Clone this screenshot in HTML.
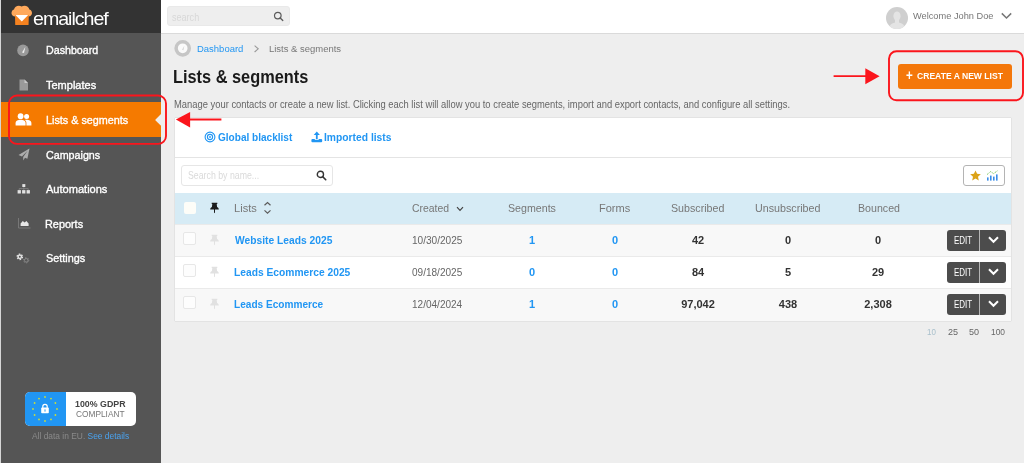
<!DOCTYPE html>
<html lang="en"><head><meta charset="utf-8"><title>Lists &amp; segments</title>
<style>
*{box-sizing:border-box;margin:0;padding:0}
html,body{width:1024px;height:463px;overflow:hidden;background:#eeeeee;font-family:"Liberation Sans",Arial,sans-serif;color:#333}
body{position:relative;will-change:transform}
.abs{position:absolute}
.t{position:absolute;white-space:nowrap;line-height:1;transform-origin:0 0}
#leftline{left:0;top:0;width:1px;height:463px;background:#d6d6d6}
#side{left:1px;top:0;width:159.6px;height:463px;background:#555555}
#logo{left:1px;top:0;width:159.6px;height:33px;background:#333333}
#top{left:160.6px;top:0;width:863.4px;height:34px;background:#fff;border-bottom:1px solid #dadada}
#active{left:1px;top:102.3px;width:159.6px;height:35px;background:#f57a00}
.mi{color:#fff;font-size:11px;font-weight:normal;-webkit-text-stroke:0.35px;left:46px}
#card{left:175px;top:117.5px;width:836px;height:203.5px;background:#fff;box-shadow:0 0 1px rgba(0,0,0,.25)}
.blue{color:#2196f3}
.hd{color:#777;font-size:11px}
.dt{color:#666;font-size:10px}
.num{color:#333;font-size:11px;font-weight:bold}
.c{width:100px;text-align:center}
.lnk{color:#2196f3;font-size:11px;font-weight:bold}
.cb{position:absolute;left:183px;width:13px;height:13px;background:#fdfdfd;border:1px solid #e7e7e7;border-radius:2px}
.edit{position:absolute;left:947px;width:59px;height:20.5px;background:#4c4c4c;border-radius:3px}
.edit i{position:absolute;left:32px;top:0;width:1px;height:20.5px;background:#b5b5b5}
.edit span{position:absolute;left:6.6px;top:6px;font-size:10px;color:#fff;line-height:1;transform:scaleX(.8);transform-origin:0 0}
.edit svg{position:absolute;left:41px;top:6px}
</style></head><body>
<div id="leftline" class="abs"></div>
<div id="side" class="abs"></div>
<div id="logo" class="abs"></div>
<div id="top" class="abs"></div>
<div id="active" class="abs"></div>

<!-- sidebar labels -->
<div class="t mi" id="m1" style="left:46px;top:45px;transform:scaleX(0.9695)">Dashboard</div>
<div class="t mi" id="m2" style="left:46px;top:80px;transform:scaleX(1.0)">Templates</div>
<div class="t mi" id="m3" style="left:46px;top:115px;transform:scaleX(0.9819)">Lists &amp; segments</div>
<div class="t mi" id="m4" style="left:46px;top:150px;transform:scaleX(0.9735)">Campaigns</div>
<div class="t mi" id="m5" style="left:46px;top:184px;transform:scaleX(1.004)">Automations</div>
<div class="t mi" id="m6" style="left:45px;top:219px;transform:scaleX(0.9886)">Reports</div>
<div class="t mi" id="m7" style="left:46px;top:253px;transform:scaleX(0.9872)">Settings</div>

<!-- logo text -->
<div class="t" id="lg" style="left:33px;top:9px;color:#fff;font-size:19px;letter-spacing:-1px;transform:scaleX(1.0330)">emailchef</div>

<!-- top bar -->
<div class="abs" id="srch" style="left:167px;top:6px;width:123px;height:20px;background:#eeeeee;border:1px solid #e9e9e9;border-radius:3px"></div>
<div class="t" id="sp" style="left:172px;top:12px;font-size:10.5px;color:#d8d8d8;transform:scaleX(0.8625)">search</div>
<div class="t" id="wl" style="left:913px;top:11.4px;font-size:9.5px;color:#777;transform:scaleX(0.9727)">Welcome John Doe</div>

<!-- breadcrumb + title -->
<div class="t blue" id="b1" style="left:197px;top:44.5px;font-size:9.2px;transform:scaleX(1.0311)">Dashboard</div>
<div class="t" id="b2" style="left:269px;top:44.5px;font-size:9.2px;color:#777;transform:scaleX(1.0307)">Lists &amp; segments</div>
<div class="t" id="ttl" style="left:173px;top:68px;font-size:18px;font-weight:bold;color:#1a1a1a;transform:scaleX(0.9078)">Lists &amp; segments</div>
<div class="t" id="dsc" style="left:174px;top:100px;font-size:10px;color:#666;transform:scaleX(0.9384)">Manage your contacts or create a new list. Clicking each list will allow you to create segments, import and export contacts, and configure all settings.</div>

<!-- create button -->
<div class="abs" id="cbtn" style="left:898px;top:64px;width:114px;height:25px;background:#f4770a;border-radius:3px"></div>
<div class="t" id="cpl" style="left:906px;top:68px;font-size:14.5px;font-weight:bold;color:#fff;transform:scaleX(0.8)">+</div>
<div class="t" id="cbt" style="left:917px;top:71px;font-size:9.4px;font-weight:bold;color:#fff;transform:scaleX(0.9147)">CREATE A NEW LIST</div>

<!-- card -->
<div id="card" class="abs"></div>
<div class="abs" style="left:175px;top:157px;width:836px;height:1px;background:#e4e4e4"></div>
<div class="t lnk" id="tb1" style="left:218px;top:131.8px;transform:scaleX(0.9138)">Global blacklist</div>
<div class="t lnk" id="tb2" style="left:324px;top:131.8px;transform:scaleX(0.9354)">Imported lists</div>
<div class="abs" style="left:181px;top:165px;width:152px;height:21px;background:#fff;border:1px solid #e6e6e6;border-radius:3px"></div>
<div class="t" id="sbn" style="left:188px;top:170px;font-size:11px;color:#dadada;transform:scaleX(0.7969)">Search by name...</div>
<div class="abs" style="left:963px;top:165px;width:42px;height:21px;background:#fff;border:1px solid #b4b4b4;border-radius:3px"></div>

<!-- table -->
<div class="abs" style="left:175px;top:193px;width:836px;height:31px;background:#d6ebf5"></div>
<div class="abs" style="left:175px;top:224px;width:836px;height:32px;background:#f8f8f8;border-top:1px solid #eaeaea"></div>
<div class="abs" style="left:175px;top:256px;width:836px;height:32px;background:#fff;border-top:1px solid #eaeaea"></div>
<div class="abs" style="left:175px;top:288px;width:836px;height:33px;background:#f8f8f8;border-top:1px solid #eaeaea"></div>

<div class="cb" style="left:184px;top:201.6px;width:12px;height:12px;border:none;background:#fdfdf8"></div>
<div class="cb" style="top:232.4px"></div>
<div class="cb" style="top:264.4px"></div>
<div class="cb" style="top:296.4px"></div>

<div class="t hd" id="h1" style="left:234px;top:203px;transform:scaleX(1.0082)">Lists</div>
<div class="t hd" id="h2" style="left:412px;top:203px;transform:scaleX(0.9482)">Created</div>
<div class="t hd" id="h3" style="left:508px;top:203px;transform:scaleX(0.9681)">Segments</div>
<div class="t hd" id="h4" style="left:599px;top:203px;transform:scaleX(1.0028)">Forms</div>
<div class="t hd" id="h5" style="left:671px;top:203px;transform:scaleX(0.9692)">Subscribed</div>
<div class="t hd" id="h6" style="left:755px;top:203px;transform:scaleX(0.9732)">Unsubscribed</div>
<div class="t hd" id="h7" style="left:858px;top:203px;transform:scaleX(0.9660)">Bounced</div>

<div class="t lnk" id="r1a" style="left:235px;top:235px;transform:scaleX(0.9332)">Website Leads 2025</div>
<div class="t lnk" id="r2a" style="left:234px;top:267px;transform:scaleX(0.9322)">Leads Ecommerce 2025</div>
<div class="t lnk" id="r3a" style="left:234px;top:299px;transform:scaleX(0.9170)">Leads Ecommerce</div>
<div class="t dt" id="r1b" style="left:412px;top:236px;transform:scaleX(1.0076)">10/30/2025</div>
<div class="t dt" id="r2b" style="left:412px;top:268px;transform:scaleX(1.0033)">09/18/2025</div>
<div class="t dt" id="r3b" style="left:412px;top:300px;transform:scaleX(1.0030)">12/04/2024</div>

<div class="edit" style="top:230px"><span>EDIT</span><i></i><svg width="11" height="8" viewBox="0 0 11 8"><path d="M1 1.2 L5.5 5.8 L10 1.2" fill="none" stroke="#fff" stroke-width="2"/></svg></div>
<div class="edit" style="top:262px"><span>EDIT</span><i></i><svg width="11" height="8" viewBox="0 0 11 8"><path d="M1 1.2 L5.5 5.8 L10 1.2" fill="none" stroke="#fff" stroke-width="2"/></svg></div>
<div class="edit" style="top:294px"><span>EDIT</span><i></i><svg width="11" height="8" viewBox="0 0 11 8"><path d="M1 1.2 L5.5 5.8 L10 1.2" fill="none" stroke="#fff" stroke-width="2"/></svg></div>

<!-- GDPR -->
<div class="abs" style="left:25px;top:392px;width:111px;height:34px;background:#fff;border-radius:5px;overflow:hidden"><div style="width:41px;height:34px;background:#2196f3"></div></div>
<div class="t" id="g1" style="left:75px;top:400px;font-size:9px;font-weight:bold;color:#444;transform:scaleX(0.9807)">100% GDPR</div>
<div class="t" id="g2" style="left:76px;top:410px;font-size:9px;color:#777;transform:scaleX(0.9242)">COMPLIANT</div>
<div class="t" id="g3" style="left:32px;top:432px;font-size:9px;color:#8a8a8a;transform:scaleX(0.9334)">All data in EU. <span style="color:#4aa3f0">See details</span></div>

<!-- pagination -->
<div class="t" id="p1" style="left:927px;top:328px;font-size:8.5px;color:#a9c0cc;transform:scaleX(0.9378)">10</div>
<div class="t" id="p2" style="left:948px;top:328px;font-size:8.5px;color:#666;transform:scaleX(1.0618)">25</div>
<div class="t" id="p3" style="left:969px;top:328px;font-size:8.5px;color:#666;transform:scaleX(1.0618)">50</div>
<div class="t" id="p4" style="left:991px;top:328px;font-size:8.5px;color:#666;transform:scaleX(0.9880)">100</div>

<!-- numbers -->
<div class="t lnk c" id="n1a" style="left:482px;top:235px">1</div>
<div class="t lnk c" id="n2a" style="left:482px;top:267px">0</div>
<div class="t lnk c" id="n3a" style="left:482px;top:299px">1</div>
<div class="t lnk c" id="n1b" style="left:565px;top:235px">0</div>
<div class="t lnk c" id="n2b" style="left:565px;top:267px">0</div>
<div class="t lnk c" id="n3b" style="left:565px;top:299px">0</div>
<div class="t num c" id="n1c" style="left:648px;top:235px">42</div>
<div class="t num c" id="n2c" style="left:648px;top:267px">84</div>
<div class="t num c" id="n3c" style="left:648px;top:299px">97,042</div>
<div class="t num c" id="n1d" style="left:738px;top:235px">0</div>
<div class="t num c" id="n2d" style="left:738px;top:267px">5</div>
<div class="t num c" id="n3d" style="left:738px;top:299px">438</div>
<div class="t num c" id="n1e" style="left:828px;top:235px">0</div>
<div class="t num c" id="n2e" style="left:828px;top:267px">29</div>
<div class="t num c" id="n3e" style="left:828px;top:299px">2,308</div>

<!-- logo icon -->
<svg class="abs" style="left:0;top:0" width="40" height="33" viewBox="0 0 40 33">
<path d="M15.2 16.4 C10.6 16.4 10.4 10.4 14 9.4 C14.6 5.8 19.2 4.6 21.6 6.6 C24.2 4.6 28.8 5.8 29.4 9.4 C33.2 10.4 32.8 16.4 28.6 16.4 Z" fill="#ffa95c"/>
<path d="M15 15 H28.8 L28.6 24.4 Q28.6 25 28 25 H15.8 Q15.2 25 15.2 24.4 Z" fill="#f58220"/>
<path d="M15.4 15 H28.2 L21.8 21.6 Z" fill="#fff"/>
</svg>

<!-- sidebar icons -->
<svg class="abs" style="left:16px;top:44px" width="14" height="13" viewBox="0 0 14 13"><circle cx="7" cy="6.4" r="5.8" fill="#999"/><path d="M6 8.6 L9.4 2.8 L8 9 Z" fill="#eee"/></svg>
<svg class="abs" style="left:19px;top:79px" width="10" height="12" viewBox="0 0 10 12"><path d="M0.5 0.5 H5.5 L9 4 V11.5 H0.5 Z" fill="#9a9a9a"/><path d="M5.5 0.5 V4 H9 Z" fill="#c8c8c8"/></svg>
<svg class="abs" style="left:15px;top:113px" width="17" height="13" viewBox="0 0 17 13"><circle cx="5.6" cy="3.2" r="2.9" fill="#fff"/><circle cx="11.6" cy="3.4" r="2.5" fill="#fff"/><path d="M0.6 12.6 V10.2 C0.6 7.6 3 6.8 5.6 6.8 C8.2 6.8 10.6 7.6 10.6 10.2 V12.6 Z" fill="#fff"/><path d="M11.4 12.6 V10 C11.4 8.6 10.8 7.6 9.8 7 C10.4 6.9 11 6.8 11.6 6.8 C14 6.8 16.4 7.6 16.4 10 V12.6 Z" fill="#fff"/></svg>
<svg class="abs" style="left:18px;top:148px" width="12" height="13" viewBox="0 0 12 13"><path d="M11.5 0.5 L0.5 7 L4 8.4 L9.6 2.8 L5.2 9 V12.4 L7 9.8 L9.4 10.8 Z" fill="#adadad"/></svg>
<svg class="abs" style="left:17px;top:183px" width="14" height="11" viewBox="0 0 14 11"><g fill="#e1e1e1"><rect x="5.3" y="1.1" width="3" height="2.9"/><rect x="0.6" y="7.1" width="3.3" height="3.4"/><rect x="5.1" y="7.1" width="3.3" height="3.4"/><rect x="9.6" y="7.1" width="3.3" height="3.4"/></g><path d="M6.8 4 V5.6 M2.2 7.1 V5.6 H11.2 V7.1 M6.8 5.6 V7.1" stroke="#8a8a8a" stroke-width="0.7" fill="none"/></svg>
<svg class="abs" style="left:18px;top:218px" width="13" height="11" viewBox="0 0 13 11"><path d="M0.5 0 V10 H12.6" stroke="#808080" stroke-width="0.8" fill="none"/><path d="M2.6 8 V5.6 L4.8 3 L6.6 4.4 L8.4 3 L10.6 5.6 V8 Z" fill="#e6e6e6"/></svg>
<svg class="abs" style="left:16px;top:252px" width="16" height="13" viewBox="0 0 16 13"><circle cx="3.8" cy="4.8" r="2.7" fill="none" stroke="#e2e2e2" stroke-width="1.3" stroke-dasharray="1.5 1.33"/><circle cx="3.8" cy="4.8" r="1.7" fill="none" stroke="#e2e2e2" stroke-width="1.5"/><circle cx="10.2" cy="8.3" r="2.6" fill="none" stroke="#8c8c8c" stroke-width="1" stroke-dasharray="1.2 1.52"/><circle cx="10.2" cy="8.3" r="1.8" fill="none" stroke="#8c8c8c" stroke-width="0.9"/></svg>
<!-- notch -->
<svg class="abs" style="left:155px;top:113px" width="6" height="14" viewBox="0 0 6 14"><path d="M6 0.9 L0.1 6.9 L6 12.8 Z" fill="#eeeeee"/></svg>

<!-- GDPR icon -->
<svg class="abs" style="left:30px;top:394px" width="30" height="30" viewBox="0 0 30 30"><g fill="#cddc39"><circle cx="15" cy="3" r="0.9"/><circle cx="21" cy="4.6" r="0.9"/><circle cx="25.4" cy="9" r="0.9"/><circle cx="27" cy="15" r="0.9"/><circle cx="25.4" cy="21" r="0.9"/><circle cx="21" cy="25.4" r="0.9"/><circle cx="15" cy="27" r="0.9"/><circle cx="9" cy="25.4" r="0.9"/><circle cx="4.6" cy="21" r="0.9"/><circle cx="3" cy="15" r="0.9"/><circle cx="4.6" cy="9" r="0.9"/><circle cx="9" cy="4.6" r="0.9"/></g><rect x="11.2" y="13.6" width="7.6" height="5.6" rx="0.8" fill="#fff"/><path d="M12.8 14 V12.6 A2.2 2.2 0 0 1 17.2 12.6 V14" fill="none" stroke="#fff" stroke-width="1.2"/><rect x="14.5" y="15.4" width="1" height="2.2" fill="#2196f3"/></svg>

<!-- top bar icons -->
<svg class="abs" style="left:273px;top:11px" width="12" height="11" viewBox="0 0 12 11"><circle cx="4.8" cy="4.6" r="3.3" fill="none" stroke="#5c5c5c" stroke-width="1.2"/><path d="M7.2 7 L9.8 9.4" stroke="#5c5c5c" stroke-width="1.4" stroke-linecap="round"/></svg>
<svg class="abs" style="left:886px;top:6.5px" width="22" height="22" viewBox="0 0 22 22"><defs><clipPath id="av"><circle cx="11" cy="11" r="11"/></clipPath></defs><circle cx="11" cy="11" r="11" fill="#cfcfcf"/><g clip-path="url(#av)" fill="#e4e4e4"><ellipse cx="11" cy="9" rx="3.6" ry="4.6"/><path d="M3 23 C3 17 7 15.6 11 15.6 C15 15.6 19 17 19 23 Z"/><rect x="9" y="12" width="4" height="5"/></g></svg>
<svg class="abs" style="left:1001px;top:12px" width="11" height="8" viewBox="0 0 11 8"><path d="M0.8 1.4 L5.5 6 L10.2 1.4" fill="none" stroke="#777" stroke-width="1.5"/></svg>

<!-- breadcrumb icons -->
<svg class="abs" style="left:174px;top:39px" width="18" height="18" viewBox="0 0 18 18"><circle cx="8.7" cy="9.3" r="6.6" fill="#fafafa" stroke="#c6c6c6" stroke-width="3.5"/><path d="M8 10.8 L10.4 6.8 L9.4 11.2 Z" fill="#d4d4d4"/></svg>
<svg class="abs" style="left:253px;top:44px" width="7" height="10" viewBox="0 0 7 10"><path d="M1.6 1.6 L5.2 4.8 L1.6 8" fill="none" stroke="#9a9a9a" stroke-width="1.1"/></svg>

<!-- tab icons -->
<svg class="abs" style="left:203.8px;top:131px" width="12" height="12" viewBox="0 0 12 12"><circle cx="6" cy="6" r="4.9" fill="none" stroke="#2196f3" stroke-width="1.1"/><circle cx="6" cy="6" r="2.6" fill="none" stroke="#2196f3" stroke-width="1.1"/><circle cx="6" cy="6" r="0.9" fill="#2196f3"/></svg>
<svg class="abs" style="left:311px;top:131px" width="12" height="12" viewBox="0 0 12 12"><path d="M5.8 0.6 L8.9 3.9 H6.7 V8.2 H4.9 V3.9 H2.7 Z" fill="#2196f3"/><path d="M1.4 8 H3.6 C3.6 9.3 8 9.3 8 8 H10.2 Q11.2 8 11.2 9 V10.2 Q11.2 11.2 10.2 11.2 H1.4 Q0.4 11.2 0.4 10.2 V9 Q0.4 8 1.4 8 Z" fill="#2196f3"/></svg>
<svg class="abs" style="left:315.6px;top:169.6px" width="11" height="11" viewBox="0 0 12 12"><circle cx="4.8" cy="4.8" r="3.4" fill="none" stroke="#333" stroke-width="1.5"/><path d="M7.4 7.4 L10.6 10.6" stroke="#333" stroke-width="1.8" stroke-linecap="round"/></svg>

<!-- star + chart -->
<svg class="abs" style="left:970px;top:170px" width="11" height="11" viewBox="0 0 11 11"><path d="M5.5 0.4 L7.1 3.8 L10.8 4.2 L8 6.7 L8.8 10.4 L5.5 8.5 L2.2 10.4 L3 6.7 L0.2 4.2 L3.9 3.8 Z" fill="#dca318"/></svg>
<svg class="abs" style="left:986px;top:170px" width="13" height="11" viewBox="0 0 13 11"><g fill="#3b8ee8"><rect x="1" y="7.4" width="1.6" height="3.2"/><rect x="4" y="5.6" width="1.6" height="5"/><rect x="7" y="6.6" width="1.6" height="4"/><rect x="10" y="4.4" width="1.6" height="6.2"/></g><path d="M1 4.6 L4.6 1.6 L7.6 3.6 L11.4 0.8" fill="none" stroke="#6cc04a" stroke-width="0.9" stroke-dasharray="1.2 0.8"/></svg>

<!-- header pin + sort -->
<svg class="abs" style="left:209px;top:202px" width="11" height="12" viewBox="0 0 11 12"><path d="M2.7 0.8 H8.3 V2 H7.7 L8.1 5 C9.2 5.5 9.8 6.5 9.8 7.6 H6 V10.4 L5.5 11.3 L5 10.4 V7.6 H1.2 C1.2 6.5 1.8 5.5 2.9 5 L3.3 2 H2.7 Z" fill="#1c1c1c"/></svg>
<svg class="abs" style="left:263px;top:201px" width="9" height="14" viewBox="0 0 9 14"><path d="M1.5 4.2 L4.5 1.5 L7.5 4.2 M1.5 9.4 L4.5 12.1 L7.5 9.4" fill="none" stroke="#5a5a5a" stroke-width="1.2"/></svg>
<svg class="abs" style="left:456px;top:206px" width="8" height="6" viewBox="0 0 8 6"><path d="M1 1.2 L4 4.4 L7 1.2" fill="none" stroke="#444" stroke-width="1.2"/></svg>
<!-- row pins -->
<svg class="abs" style="left:209px;top:234px" width="11" height="12" viewBox="0 0 11 12"><path d="M2.7 0.8 H8.3 V2 H7.7 L8.1 5 C9.2 5.5 9.8 6.5 9.8 7.6 H6 V10.4 L5.5 11.3 L5 10.4 V7.6 H1.2 C1.2 6.5 1.8 5.5 2.9 5 L3.3 2 H2.7 Z" fill="#e1e1e1"/></svg>
<svg class="abs" style="left:209px;top:266px" width="11" height="12" viewBox="0 0 11 12"><path d="M2.7 0.8 H8.3 V2 H7.7 L8.1 5 C9.2 5.5 9.8 6.5 9.8 7.6 H6 V10.4 L5.5 11.3 L5 10.4 V7.6 H1.2 C1.2 6.5 1.8 5.5 2.9 5 L3.3 2 H2.7 Z" fill="#e1e1e1"/></svg>
<svg class="abs" style="left:209px;top:298px" width="11" height="12" viewBox="0 0 11 12"><path d="M2.7 0.8 H8.3 V2 H7.7 L8.1 5 C9.2 5.5 9.8 6.5 9.8 7.6 H6 V10.4 L5.5 11.3 L5 10.4 V7.6 H1.2 C1.2 6.5 1.8 5.5 2.9 5 L3.3 2 H2.7 Z" fill="#e1e1e1"/></svg>

<!-- red annotations -->
<svg class="abs" style="left:0;top:0;pointer-events:none" width="1024" height="463" viewBox="0 0 1024 463">
<rect x="9" y="95.5" width="157" height="48.4" rx="8" fill="none" stroke="#fb151c" stroke-width="1.9"/>
<rect x="889" y="51.3" width="134" height="49" rx="7.5" fill="none" stroke="#fb151c" stroke-width="1.9"/>
<path d="M189 119.5 H221.4" stroke="#fb151c" stroke-width="1.9"/><path d="M175.9 119.5 L190.1 111.9 V127.5 Z" fill="#fb151c"/>
<path d="M833.6 76.1 H866" stroke="#fb151c" stroke-width="1.9"/><path d="M879.6 76.2 L865.3 68.2 V84.2 Z" fill="#fb151c"/>
</svg>
</body></html>
